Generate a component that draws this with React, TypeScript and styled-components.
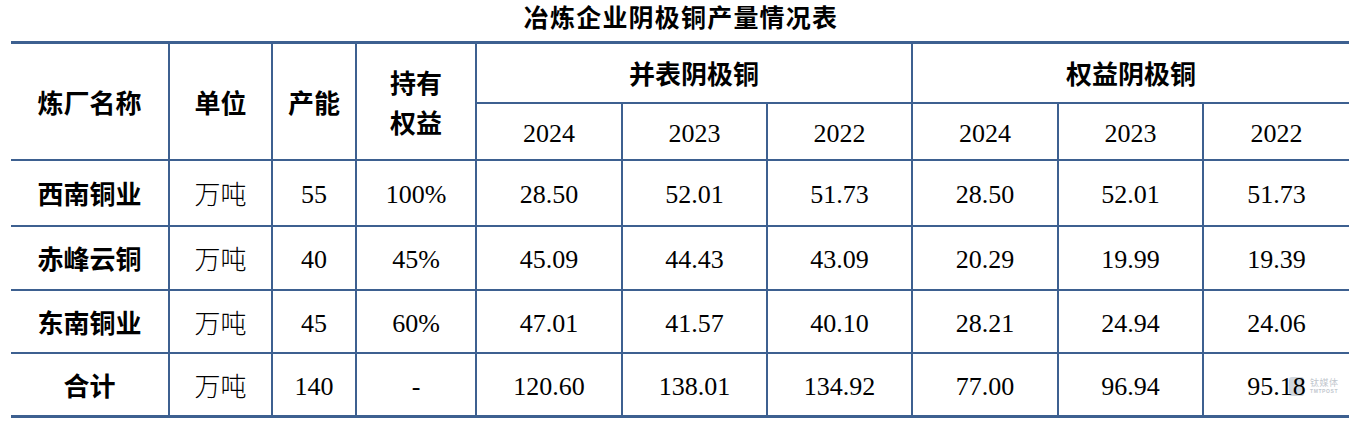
import React from "react";
import styled, { createGlobalStyle } from "styled-components";

const GlobalStyle = createGlobalStyle`
  html, body { margin: 0; padding: 0; background: #ffffff; }
  body { font-family: "Liberation Serif", "Noto Sans CJK SC", serif; color: #000; }
`;

const LINE = "#3d6090";

const Page = styled.div`
  width: 1371px;
  height: 423px;
  padding: 0 22px 0 11px;
  box-sizing: border-box;
  display: flex;
  flex-direction: column;
`;

const Title = styled.div`
  height: 41px;
  display: flex;
  align-items: center;
  justify-content: center;
  padding-bottom: 9px;
  box-sizing: border-box;
  font-family: "Noto Sans CJK SC", sans-serif;
  font-weight: 700;
  font-size: 25px;
  letter-spacing: 1.2px;
  padding-left: 2px;
`;

const Table = styled.table`
  width: 1338px;
  border-collapse: collapse;
  table-layout: fixed;
  border-top: 3px solid ${LINE};
  border-bottom: 3px solid ${LINE};
`;

const Cell = styled.td<{ $head?: boolean; $bold?: boolean; $cjk?: boolean }>`
  border: 2px solid ${LINE};
  border-top-width: ${(p) => (p.$head ? "0" : "2px")};
  text-align: center;
  vertical-align: middle;
  padding: ${(p) => (p.$cjk || p.$bold ? "0" : "5px 0 0 0")};
  font-size: 26px;
  font-family: ${(p) =>
    p.$cjk || p.$bold
      ? `"Noto Sans CJK SC", sans-serif`
      : `"Liberation Serif", "Noto Sans CJK SC", serif`};
  font-weight: ${(p) => (p.$bold ? 700 : p.$cjk ? 300 : 400)};
  position: relative;
  &:first-child { border-left: none; }
  &:last-child { border-right: none; }
`;

const Num = styled.span`
  position: relative;
  z-index: 1;
`;

const TwoLine = styled.div`
  line-height: 40px;
  padding-top: 2px;
`;

const Row = styled.tr<{ $h: number }>`
  height: ${(p) => p.$h}px;
`;

const Watermark = styled.div`
  position: absolute;
  left: 85px;
  top: 23px;
  z-index: 0;
  display: flex;
  align-items: center;
  gap: 6px;
  opacity: 0.6;
  pointer-events: none;
`;

const WmLogo = styled.div`
  width: 15px;
  height: 19px;
  border-radius: 3px;
  background: #b4bec9;
`;

const WmText = styled.div`
  display: flex;
  flex-direction: column;
  align-items: flex-start;
  line-height: 1;
  color: #98a2ad;
`;

const WmCn = styled.span`
  font-family: "Noto Sans CJK SC", sans-serif;
  font-size: 9px;
  letter-spacing: 0.5px;
`;

const WmEn = styled.span`
  font-family: "Liberation Sans", sans-serif;
  font-size: 5px;
  font-weight: 700;
  letter-spacing: 0.6px;
  margin-top: 2px;
`;

const widths = [158, 103, 84, 120, 146, 145, 145, 146, 145, 146];

type DataRow = {
  name: string;
  cap: string;
  share: string;
  vals: string[];
  h: number;
};

const rows: DataRow[] = [
  { name: "西南铜业", cap: "55", share: "100%", vals: ["28.50", "52.01", "51.73", "28.50", "52.01", "51.73"], h: 66 },
  { name: "赤峰云铜", cap: "40", share: "45%", vals: ["45.09", "44.43", "43.09", "20.29", "19.99", "19.39"], h: 64 },
  { name: "东南铜业", cap: "45", share: "60%", vals: ["47.01", "41.57", "40.10", "28.21", "24.94", "24.06"], h: 63 },
  { name: "合计", cap: "140", share: "-", vals: ["120.60", "138.01", "134.92", "77.00", "96.94", "95.18"], h: 64 },
];

const years = ["2024", "2023", "2022", "2024", "2023", "2022"];

export default function App() {
  return (
    <>
      <GlobalStyle />
      <Page>
        <Title>冶炼企业阴极铜产量情况表</Title>
        <Table>
          <colgroup>
            {widths.map((w, i) => (
              <col key={i} style={{ width: w }} />
            ))}
          </colgroup>
          <tbody>
            <Row $h={60}>
              <Cell $head $bold rowSpan={2}>炼厂名称</Cell>
              <Cell $head $bold rowSpan={2}>单位</Cell>
              <Cell $head $bold rowSpan={2}>产能</Cell>
              <Cell $head $bold rowSpan={2}>
                <TwoLine>持有<br />权益</TwoLine>
              </Cell>
              <Cell $head $bold colSpan={3}>并表阴极铜</Cell>
              <Cell $head $bold colSpan={3}>权益阴极铜</Cell>
            </Row>
            <Row $h={57}>
              {years.map((y, i) => (
                <Cell key={i}>{y}</Cell>
              ))}
            </Row>
            {rows.map((r, ri) => (
              <Row key={r.name} $h={r.h}>
                <Cell $bold>{r.name}</Cell>
                <Cell $cjk>万吨</Cell>
                <Cell>{r.cap}</Cell>
                <Cell>{r.share}</Cell>
                {r.vals.map((v, vi) => (
                  <Cell key={vi}>
                    <Num>{v}</Num>
                    {ri === rows.length - 1 && vi === r.vals.length - 1 && (
                      <Watermark>
                        <WmLogo />
                        <WmText>
                          <WmCn>钛媒体</WmCn>
                          <WmEn>TMTPOST</WmEn>
                        </WmText>
                      </Watermark>
                    )}
                  </Cell>
                ))}
              </Row>
            ))}
          </tbody>
        </Table>
      </Page>
    </>
  );
}
